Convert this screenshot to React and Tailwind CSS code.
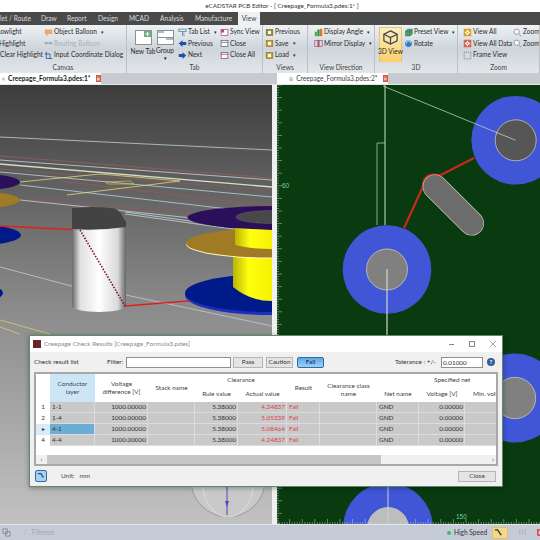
import React from "react";

const Ic = ({ c = "#3b6fb5", k = "sq", s = 9 }) => {
  const shapes = {
    sq: <rect x="1.5" y="1.5" width="9" height="9" fill={c} stroke="#555" strokeWidth=".6" />,
    left: <path d="M1 6 L6 1.5 V4 H11 V8 H6 V10.5 Z" fill={c} />,
    right: <path d="M11 6 L6 1.5 V4 H1 V8 H6 V10.5 Z" fill={c} />,
    win: <g fill="#fff" stroke={c} strokeWidth="1"><rect x="1.5" y="2" width="9" height="8" /><path d="M1.5 4.5 H10.5" /></g>,
    tree: <g fill="none" stroke={c} strokeWidth="1"><rect x="1" y="1.5" width="10" height="3" /><path d="M6 4.5 V10 M6 7 H9 M6 10 H9" /></g>,
    mag: <g fill="#fff" stroke={c} strokeWidth="1"><circle cx="5" cy="5" r="3.5" /><path d="M8 8 L11 11" /></g>,
    all: <g><rect x="1" y="1" width="10" height="10" fill={c} /><path d="M6 2 L8 5 H4 Z M6 10 L4 7 H8 Z M2 6 L5 4 V8 Z M10 6 L7 8 V4 Z" fill="#fff" /></g>,
    frame: <g fill="none" stroke={c} strokeWidth="1" strokeDasharray="1.5 1"><rect x="1.5" y="1.5" width="9" height="9" /></g>,
    ball: <g><circle cx="6" cy="6" r="4.5" fill={c} /><path d="M3 6 A3 3 0 0 1 9 5" fill="none" stroke="#fff" /></g>,
    balloon: <path d="M1 2 H11 V8 H6 L3 11 V8 H1 Z" fill={c} />,
    dash: <g fill={c}><rect x="1" y="4" width="4" height="3" /><rect x="6" y="4" width="5" height="3" /></g>,
    coord: <g fill="none" stroke={c} strokeWidth="1.2"><path d="M3 1 V10 H11 M1 4 H8 V10" /></g>,
    disp: <g><rect x="1" y="5" width="3" height="6" fill="#4caf50" /><rect x="4.5" y="2" width="3" height="9" fill="#388e3c" /><rect x="8" y="1" width="3" height="10" fill={c} /></g>,
    mirror: <g fill="none" stroke={c} strokeWidth="1"><rect x="1" y="2" width="4" height="8" /><rect x="7" y="2" width="4" height="8" /><path d="M6 1 V11" stroke="#555" /></g>,
    preset: <g fill="#4f9e6a" stroke="#2b6b44" strokeWidth=".7"><path d="M2 4 L5 1.5 H11 V8 L8 10.5 H2 Z" /><path d="M2 4 H8 V10.5 M8 4 L11 1.5" fill="none" /></g>,
    views: <g><rect x="1.5" y="2" width="9" height="8" fill={c} stroke="#6b5c20" strokeWidth=".6" /><rect x="4" y="4" width="4" height="4" fill="#fff" /></g>,
    sync: <g><rect x="1.5" y="2" width="9" height="8" fill="#fff" stroke="#b04a7a" /><rect x="1.5" y="2" width="4" height="4" fill="#b04a7a" /></g>,
  };
  return <svg viewBox="0 0 12 12" width={s} height={s} className="shrink-0">{shapes[k]}</svg>;
};

const Row = ({ icon, c, text, caret, dim, className = "" }) => (
  <div className={`flex items-center h-[11.5px] gap-[1px] whitespace-nowrap ${dim ? "text-[#a9b0b6]" : "text-[#2b2b2b]"} ${className}`}>
    {icon && <Ic k={icon} c={c} />}
    <span>{text}</span>
    {caret && <span className="text-[5px] ml-[3px]">▾</span>}
  </div>
);

const Group = ({ w, label, children, className = "" }) => (
  <div className={`relative shrink-0 h-full flex flex-col border-r border-[#b9c0c6] ${w}`}>
    <div className={`flex h-[37px] pt-[1.5px] overflow-hidden ${className}`}>{children}</div>
    <div className="text-center text-[#444] h-[11px] leading-[11px]">{label}</div>
  </div>
);

const Big = ({ text, extra, children, w = "w-[24px]" }) => (
  <div className={`flex flex-col items-center shrink-0 ${w}`}>
    <div className="h-[19px] pt-[3px] flex items-start justify-center">{children}</div>
    <div className="leading-[10px] whitespace-nowrap text-[#2b2b2b]">{text}</div>
    {extra && <div className="leading-[7px] text-[5px]">▾</div>}
  </div>
);

const Ribbon = () => (
  <div className="flex h-[48px] overflow-hidden bg-gradient-to-b from-[#eff2f4] via-[#cdd5db] to-[#e4e6e9] text-[6.6px]">
    <Group w="w-[127px]" label="Canvas">
      <div className="w-[44px] shrink-0">
        <Row text="Lowlight" className="-ml-[3px]" />
        <Row text="Highlight" className="-ml-[1px]" />
        <Row text="Clear Highlight" />
      </div>
      <div>
        <Row icon="balloon" c="#eda866" text="Object Balloon" caret />
        <Row icon="dash" c="#a3a9b0" text="Routing Balloon" dim />
        <Row icon="coord" c="#2d5fa8" text="Input Coordinate Dialog" />
      </div>
    </Group>
    <Group w="w-[136px]" label="Tab" className="pl-[4px]">
      <Big text="New Tab">
        <svg viewBox="0 0 17 15" width="17" height="15"><rect x=".5" y=".5" width="16" height="14" fill="#fff" stroke="#8a9299" /><rect x="9" y="1" width="7" height="6" fill="#6fae7a" /><path d="M12.5 2 V6 M10.5 4 H14.5" stroke="#fff" /></svg>
      </Big>
      <Big text="Group" extra w="w-[20px]">
        <svg viewBox="0 0 17 15" width="17" height="15"><rect x=".5" y=".5" width="16" height="14" fill="#fff" stroke="#8a9299" /><path d="M1 7.5 H16" stroke="#8a9299" /><rect x="1" y="1" width="6" height="2" fill="#b0bac3" /><rect x="9" y="8" width="7" height="2" fill="#b0bac3" /></svg>
      </Big>
      <div className="w-[42px] ml-[3px] shrink-0">
        <Row icon="tree" c="#4c7f9e" text="Tab List" caret />
        <Row icon="left" c="#1d4fb0" text="Previous" />
        <Row icon="right" c="#1d4fb0" text="Next" />
      </div>
      <div>
        <Row icon="sync" text="Sync View" />
        <Row icon="win" c="#5a6a78" text="Close" />
        <Row icon="win" c="#8a4a5a" text="Close All" />
      </div>
    </Group>
    <Group w="w-[45px]" label="Views" className="pl-[2px]">
      <div>
        <Row icon="views" c="#9c8a3a" text="Previous" />
        <Row icon="views" c="#c9a227" text="Save" caret />
        <Row icon="views" c="#c9a227" text="Load" caret />
      </div>
    </Group>
    <Group w="w-[67px]" label="View Direction" className="pl-[6px]">
      <div>
        <Row icon="disp" c="#d9782d" text="Display Angle" caret />
        <Row icon="mirror" c="#c0507a" text="Mirror Display" caret />
      </div>
    </Group>
    <Group w="w-[83px]" label="3D" className="pl-[4px]">
      <div className="w-[23px] h-[36px] mr-[2px] shrink-0 flex flex-col items-center bg-gradient-to-b from-[#fdeebc] to-[#fbd06a] border border-[#e3c27a]">
        <svg viewBox="0 0 18 18" width="17" height="17" className="mt-[1.5px]"><g fill="none" stroke="#3c4752" strokeWidth="1.3"><path d="M9 2 L16 5.5 V12.5 L9 16 L2 12.5 V5.5 Z" /><path d="M2 5.5 L9 9 L16 5.5 M9 9 V16" /></g></svg>
        <span className="whitespace-nowrap leading-[10px] -mx-[2px] text-[#2b2b2b]">3D View</span>
      </div>
      <div>
        <Row icon="preset" text="Preset View" caret />
        <Row icon="ball" c="#2f7fc1" text="Rotate" />
      </div>
    </Group>
    <Group w="w-[82px]" label="Zoom" className="pl-[5px] !border-r-0">
      <div className="w-[50px] shrink-0">
        <Row icon="all" c="#d9a11f" text="View All" />
        <Row icon="all" c="#d9604a" text="View All Data" />
        <Row icon="frame" c="#6a7783" text="Frame View" />
      </div>
      <div>
        <Row icon="mag" c="#6a7f93" text="Zoom" />
        <Row icon="mag" c="#6a7f93" text="Zoom" />
      </div>
    </Group>
  </div>
);

const Tab = ({ text, className = "" }) => (
  <div className={`flex items-center h-full bg-white gap-[3px] text-[6.6px] text-[#222] whitespace-nowrap ${className}`}>
    <svg viewBox="0 0 10 10" width="8" height="8"><path d="M2 1 H6.5 L8.5 3 V9 H2 Z" fill="#fff" stroke="#5b7f5b" /><rect x="3.5" y="4" width="3" height="3" fill="#6fa36f" /></svg>
    <span>{text}</span>
    <span className="ml-[2px] w-[7px] h-[7px] bg-[#e8734f] border border-[#c55] flex items-center justify-center text-white text-[6px] leading-none">×</span>
  </div>
);

const Left3D = () => (
  <svg viewBox="0 85 272 439" className="w-full h-full block" preserveAspectRatio="none">
    <defs>
      <linearGradient id="bg3" x1="0" y1="0" x2="0" y2="1">
        <stop offset="0" stopColor="#3c3c3c" />
        <stop offset=".2" stopColor="#5c5c5c" />
        <stop offset=".5" stopColor="#8a8a8a" />
        <stop offset="1" stopColor="#c2c2c2" />
      </linearGradient>
      <linearGradient id="cyl" x1="0" y1="0" x2="1" y2="0">
        <stop offset="0" stopColor="#6a6a6a" />
        <stop offset=".15" stopColor="#e0e0e0" />
        <stop offset=".5" stopColor="#ffffff" />
        <stop offset=".85" stopColor="#d8d8d8" />
        <stop offset="1" stopColor="#666" />
      </linearGradient>
      <linearGradient id="yel" x1="0" y1="0" x2="1" y2="0">
        <stop offset="0" stopColor="#b9b400" />
        <stop offset=".4" stopColor="#ffff10" />
        <stop offset="1" stopColor="#f5f000" />
      </linearGradient>
    </defs>
    <rect x="0" y="85" width="272" height="439" fill="url(#bg3)" />
    <g fill="none" strokeWidth=".8">
      <path d="M0 137 L272 150" stroke="#b9d3d8" />
      <path d="M0 156 L272 178" stroke="#8a5c58" strokeWidth="1.2" />
      <path d="M0 160 L272 180" stroke="#c9d3d6" />
      <path d="M0 164 L272 187" stroke="#d5dcc8" strokeWidth="1.4" />
      <path d="M0 169 L272 190" stroke="#7f5f5c" strokeWidth="1.2" />
      <path d="M0 172 L272 197" stroke="#bcd0d6" />
      <path d="M20 185 L272 214" stroke="#b9d0d6" />
      <path d="M60 181 L272 206" stroke="#8a5c58" strokeWidth="1.2" />
      <path d="M20 199 L215 215" stroke="#8a5c58" strokeWidth="1.2" />
      <path d="M20 200 L230 222" stroke="#c5d5d8" />
      <path d="M125 212 L240 228" stroke="#c5d5d8" />
      <path d="M125 214 L240 230" stroke="#c5d5d8" />
      <path d="M20 182 L100 174 L180 181 L67 195" stroke="#e3d774" />
      <path d="M105 182 L130 181 L134 184 L108 184 Z" stroke="#c9b54c" />
      <path d="M0 267 L75 287 M126 295 L272 326" stroke="#b5d0d6" />
      <path d="M0 320 L50 334 M0 327 L20 334" stroke="#d8cf6a" />
    </g>
    <ellipse cx="-20" cy="182" rx="40" ry="8" fill="#2c0f5a" />
    <ellipse cx="-20" cy="200" rx="40" ry="8" fill="#a07a24" />
    <ellipse cx="-20" cy="235" rx="41" ry="10" fill="#001a8a" />
    <ellipse cx="-18" cy="293" rx="21" ry="8" fill="#001a8a" />
    <path d="M0 226 L80 230" stroke="#e0201c" strokeWidth="1.6" />
    <path d="M72 218 V306 A27 6 0 0 0 126 306 V218 Z" fill="url(#cyl)" />
    <path d="M72 208 V229 Q98 231 126 227 V222 L120 212 Q116 208 110 208 Q90 206 76 208 Z" fill="#434343" />
    <path d="M80 230 L125 306" stroke="#7a1018" strokeWidth="1.6" strokeDasharray="1.5 1.5" />
    <path d="M125 306 L200 300" stroke="#e0201c" strokeWidth="1.6" />
    <ellipse cx="270" cy="295" rx="85" ry="20" fill="#1a2fc0" />
    <ellipse cx="270" cy="293" rx="85" ry="19" fill="#001a8a" />
    <path d="M233 256 V287 Q250 301 272 301 V256 Z" fill="url(#yel)" />
    <ellipse cx="270" cy="244" rx="84" ry="14.5" fill="#fff3c0" />
    <ellipse cx="270" cy="243" rx="84" ry="14.5" fill="#a07a24" />
    <path d="M235 228 V245 Q250 249 272 249 V228 Z" fill="url(#yel)" />
    <path d="M272 206 A84 12 0 0 0 188 216 A84 12 0 0 0 235 228 L272 230 Z" fill="#2c0f5a" />
    <ellipse cx="272" cy="217" rx="36" ry="6.5" fill="#484848" stroke="#bbb" strokeWidth=".4" strokeDasharray="1 1" />
    <g>
      <circle cx="228" cy="480" r="37" fill="#c9c9c9" stroke="#9a9a9a" />
      <ellipse cx="228" cy="480" rx="26" ry="37" fill="none" stroke="#dedede" />
      <path d="M227 470 V515" stroke="#4b4bb8" strokeWidth="1" />
      <path d="M225 501 L227 507 L229 501 Z" fill="#4b4bb8" />
    </g>
  </svg>
);

const RightPCB = () => {
  const vt = Array.from({ length: 176 }, (_, i) => i * 2.52);
  const ht = Array.from({ length: 106 }, (_, i) => i * 2.52);
  return (
    <svg viewBox="277 85 263 439" className="w-full h-full block" preserveAspectRatio="none">
      <rect x="277" y="85" width="263" height="439" fill="#0a3a10" />
      <path d="M385 143 H377 V225" fill="none" stroke="#a9c8a4" strokeWidth=".8" />
      <path d="M385 85 V225" stroke="#a9c8a4" strokeWidth="1.2" />
      <circle cx="515.7" cy="140.3" r="44.3" fill="#4056d6" />
      <circle cx="515.7" cy="140.3" r="20.5" fill="#565656" stroke="#d6d6b8" strokeWidth=".7" />
      <path d="M383 86 L515.7 140.3" stroke="#cfe0c8" strokeWidth=".7" />
      <circle cx="387" cy="269.5" r="44.3" fill="#4056d6" />
      <circle cx="387" cy="269.5" r="20.5" fill="#808080" stroke="#d6d6b8" strokeWidth=".7" />
      <path d="M387 269 V340" stroke="#cfd8d0" strokeWidth="1.2" />
      <path d="M404 228 L422.8 187 Q423 175 433 174.5 L441 175 L474 158" fill="none" stroke="#c72a1e" strokeWidth="2.2" />
      <path d="M435 186.7 L471.7 223.3" stroke="#d6d6b8" strokeWidth="24.6" strokeLinecap="round" />
      <path d="M435 186.7 L471.7 223.3" stroke="#6c6c6c" strokeWidth="23.5" strokeLinecap="round" />
      <circle cx="515" cy="398" r="44.5" fill="#4056d6" />
      <circle cx="515" cy="398" r="20.7" fill="#808080" stroke="#d6d6b8" strokeWidth=".7" />
      <circle cx="388" cy="528" r="45" fill="#4056d6" />
      <circle cx="388" cy="528" r="20.5" fill="#bdbdbd" stroke="#d6d6b8" strokeWidth=".7" />
      <path d="M388 485 V524" stroke="#c5d0d8" strokeWidth="1" />
      <g stroke="#bcd8c0" strokeWidth=".5">
        {vt.map((y, i) => (
          <path key={i} d={`M277 ${85 + y} H${i % 5 === 0 ? 282 : 279}`} />
        ))}
        {ht.map((x, i) => (
          <path key={i} d={`M${277 + x} 524 V${i % 5 === 0 ? 519 : 522}`} />
        ))}
      </g>
      <text x="282" y="188" fontSize="6.5" fill="#6fd0a0" fontFamily="Liberation Sans, sans-serif">60</text>
      <text x="456" y="519" fontSize="6.5" fill="#6fd0a0" fontFamily="Liberation Sans, sans-serif">150</text>
    </svg>
  );
};

const rows = [
  ["1", "1-1", "4.24837"],
  ["2", "1-4", "5.05339"],
  ["3", "4-1", "5.08464"],
  ["4", "4-4", "4.24837"],
];

const cols = "grid-cols-[14px_45px_53px_47px_43px_49px_33px_57px_42px_46px_33px]";

const Th = ({ className = "", children }) => (
  <div className={`flex items-center justify-center text-center leading-[8.5px] text-[#444] ${className}`}>{children}</div>
);

const Cell = ({ className = "", children }) => (
  <div className={`h-[10.9px] leading-[10.9px] px-[1px] bg-[#c9c9c9] border-r border-b border-[#dcdcdc] whitespace-nowrap text-[#333] ${className}`}>{children}</div>
);

const Dialog = () => (
  <div className="absolute left-[29px] top-[335px] w-[474px] h-[152px] flex flex-col bg-[#f0f0f0] border border-[#5f8a6a] shadow-[0_1px_5px_rgba(0,0,0,.35)] text-[6.4px]">
    <div className="h-[16px] bg-white flex items-center pl-[3px] shrink-0">
      <div className="w-[8px] h-[8px] bg-[#6a2428] mr-[3px]" />
      <span className="text-[#8a8a8a] text-[6.5px]">Creepage Check Results [Creepage_Formula3.pdes]</span>
      <div className="ml-auto flex items-center gap-[15px] pr-[6px] text-[#888]">
        <div className="w-[5px] h-[1px] bg-[#888]" />
        <div className="w-[6px] h-[6px] border border-[#888]" />
        <svg viewBox="0 0 8 8" width="6" height="6"><path d="M0 0 L8 8 M8 0 L0 8" stroke="#888" /></svg>
      </div>
    </div>
    <div className="flex items-center h-[20px] pl-[4px] shrink-0 text-[#333]">
      <span className="w-[73px]">Check result list</span>
      <span className="w-[19px]">Filter:</span>
      <div className="w-[105px] h-[11px] bg-white border border-[#8f8f8f]" />
      <div className="ml-[2px] w-[30px] h-[11px] bg-[#e4e4e4] border border-[#b5b5b5] flex items-center justify-center">Pass</div>
      <div className="ml-[3px] w-[27px] h-[11px] bg-[#e4e4e4] border border-[#b5b5b5] flex items-center justify-center">Caution</div>
      <div className="ml-[4px] w-[27px] h-[11px] bg-gradient-to-b from-[#58a8ea] to-[#9fd0f5] border border-[#2a6f9e] rounded-[2px] flex items-center justify-center text-[#123]">Fail</div>
      <span className="ml-[71px] whitespace-nowrap w-[46px]">Tolerance : +/-</span>
      <div className="w-[42px] h-[11px] bg-white border border-[#8f8f8f] px-[1px] leading-[9px]">0.01000</div>
      <div className="ml-[4px] w-[8px] h-[8px] rounded-full bg-[#2f5fa0] text-white text-[6px] leading-[8px] text-center font-bold">?</div>
    </div>
    <div className="mx-[4px] h-[94px] bg-white border-2 border-[#a8a8a8] flex flex-col overflow-hidden shrink-0">
      <div className={`grid ${cols} grid-rows-[12px_16px] shrink-0`}>
        <div className="row-span-2" />
        <Th className="row-span-2 bg-[#cde6f7]">Conductor<br />layer</Th>
        <Th className="row-span-2">Voltage<br />difference [V]</Th>
        <Th className="row-span-2">Stack name</Th>
        <Th className="col-span-2">Clearance</Th>
        <Th className="row-span-2">Result</Th>
        <Th className="row-span-2 pt-[4px]">Clearance class<br />name</Th>
        <Th className="col-span-3 justify-start pl-[57px] whitespace-nowrap">Specified net</Th>
        <Th>Rule value</Th>
        <Th>Actual value</Th>
        <Th>Net name</Th>
        <Th>Voltage [V]</Th>
        <Th className="whitespace-nowrap overflow-hidden justify-start pl-[8px]">Min. volt</Th>
      </div>
      <div className={`grid ${cols}`}>
        {rows.map(([n, l, a]) => {
          const sel = n === "3";
          return (
            <React.Fragment key={n}>
              <div className={`h-[10.9px] leading-[10.9px] text-center text-[#333] ${sel ? "bg-[#d8ecf8] text-[#111]" : "bg-white"}`}>{sel ? "▸" : n}</div>
              <Cell className={sel ? "!bg-[#6aaed6] pl-[2px]" : "pl-[2px]"}>{l}</Cell>
              <Cell className="text-right">1000.00000</Cell>
              <Cell />
              <Cell className="text-right">5.38000</Cell>
              <Cell className="text-right !text-[#e0404f]">{a}</Cell>
              <Cell className="!text-[#e0404f] pl-[2px]">Fail</Cell>
              <Cell />
              <Cell className="pl-[2px]">GND</Cell>
              <Cell className="text-right">0.00000</Cell>
              <Cell />
            </React.Fragment>
          );
        })}
      </div>
      <div className="mt-auto h-[9px] flex items-center bg-[#f0f0f0] shrink-0 text-[#555] text-[7px]">
        <span className="w-[11px] text-center">‹</span>
        <div className="w-[334px] h-full bg-[#c6c6c6]" />
        <span className="ml-auto pr-[2px]">›</span>
      </div>
    </div>
    <div className="flex items-center flex-1 pl-[5px] pr-[6px] text-[#444]">
      <div className="w-[12px] h-[12px] rounded-[2px] bg-[#a9d2f0] border border-[#2a6f9e] flex items-center justify-center">
        <svg viewBox="0 0 10 10" width="8" height="8"><path d="M1 2 H5 L8 7" fill="none" stroke="#1c4f9e" strokeWidth="1.6" /></svg>
      </div>
      <span className="ml-[14px]">Unit:</span>
      <span className="ml-[5px]">mm</span>
      <div className="ml-auto w-[38px] h-[11px] bg-[#e4e4e4] border border-[#b5b5b5] flex items-center justify-center">Close</div>
    </div>
  </div>
);

const Menu = ({ w, children }) => (
  <span className={`h-full leading-[13px] whitespace-nowrap shrink-0 ${w}`}>{children}</span>
);

export default function App() {
  return (
    <div className="relative w-[540px] h-[540px] overflow-hidden flex flex-col bg-white font-['Lato','Liberation_Sans',sans-serif]">
      <div className="h-[12px] shrink-0 bg-white flex items-center justify-center text-[6.3px] text-[#333] pl-[24px]">
        eCADSTAR PCB Editor - [ Creepage_Formula3.pdes:1* ]
      </div>
      <div className="h-[13px] shrink-0 bg-[#4a4a4a] flex items-end text-[6.6px] text-[#dcdcdc] relative">
        <Menu w="w-[41px]">let / Route</Menu>
        <Menu w="w-[26px]">Draw</Menu>
        <Menu w="w-[31px]">Report</Menu>
        <Menu w="w-[31px]">Design</Menu>
        <Menu w="w-[31px]">MCAD</Menu>
        <Menu w="w-[35px]">Analysis</Menu>
        <Menu w="w-[43px]">Manufacture</Menu>
        <Menu w="w-[22px] bg-[#eef1f3] !text-[#444] text-center">View</Menu>
      </div>
      <Ribbon />
      <div className="flex h-[12px] shrink-0 bg-[#c7cbd0] border-b border-[#e6e6e6]">
        <div className="w-[277px] shrink-0 h-full">
          <Tab text="Creepage_Formula3.pdes:1*" className="w-[101px] pl-[2px] font-bold" />
        </div>
        <Tab text="Creepage_Formula3.pdes:2*" className="w-[111px] pl-[12px] text-[#444]" />
      </div>
      <div className="flex flex-1 min-h-0 bg-[#f0f0f0]">
        <div className="w-[272px] h-full shrink-0"><Left3D /></div>
        <div className="w-[5px] h-full shrink-0 bg-[#efefef]" />
        <div className="flex-1 h-full"><RightPCB /></div>
      </div>
      <div className="h-[16px] shrink-0 bg-[#c6ccd7] flex items-center text-[6.6px] text-[#333] border-t border-[#e5e7ea]">
        <svg viewBox="0 0 10 10" width="9" height="9" className="ml-[2px]"><path d="M1 1 H6 V6 H1 Z M4 4 H9 V9 H4 Z" fill="none" stroke="#7f8a96" /></svg>
        <span className="ml-[13px] text-[#a3a9b2]">/ . Filtered</span>
        <div className="ml-auto w-[4px] h-[4px] rounded-full bg-[#28c850]" />
        <span className="ml-[3px] w-[38px] whitespace-nowrap">High Speed</span>
        <div className="w-[16px] h-[12px] bg-[#f5d98a] border border-[#e0c070] flex items-center pl-[1px]">
          <svg viewBox="0 0 10 10" width="9" height="9"><path d="M1 2 H4 L8 8" fill="none" stroke="#333" strokeWidth="1.5" /></svg>
        </div>
        <svg viewBox="0 0 10 10" width="9" height="9" className="ml-[10px]"><path d="M2 2 V8 M5 2 V8 M8 2 V8" stroke="#9aa2ad" strokeDasharray="1 1" strokeWidth="1.4" /></svg>
        <svg viewBox="0 0 10 10" width="9" height="9" className="ml-[9px] -mr-[5px] shrink-0"><path d="M1 2 H8 M2 2 V8 H8" fill="none" stroke="#d33" strokeWidth="1.4" /></svg>
      </div>
      <Dialog />
    </div>
  );
}
